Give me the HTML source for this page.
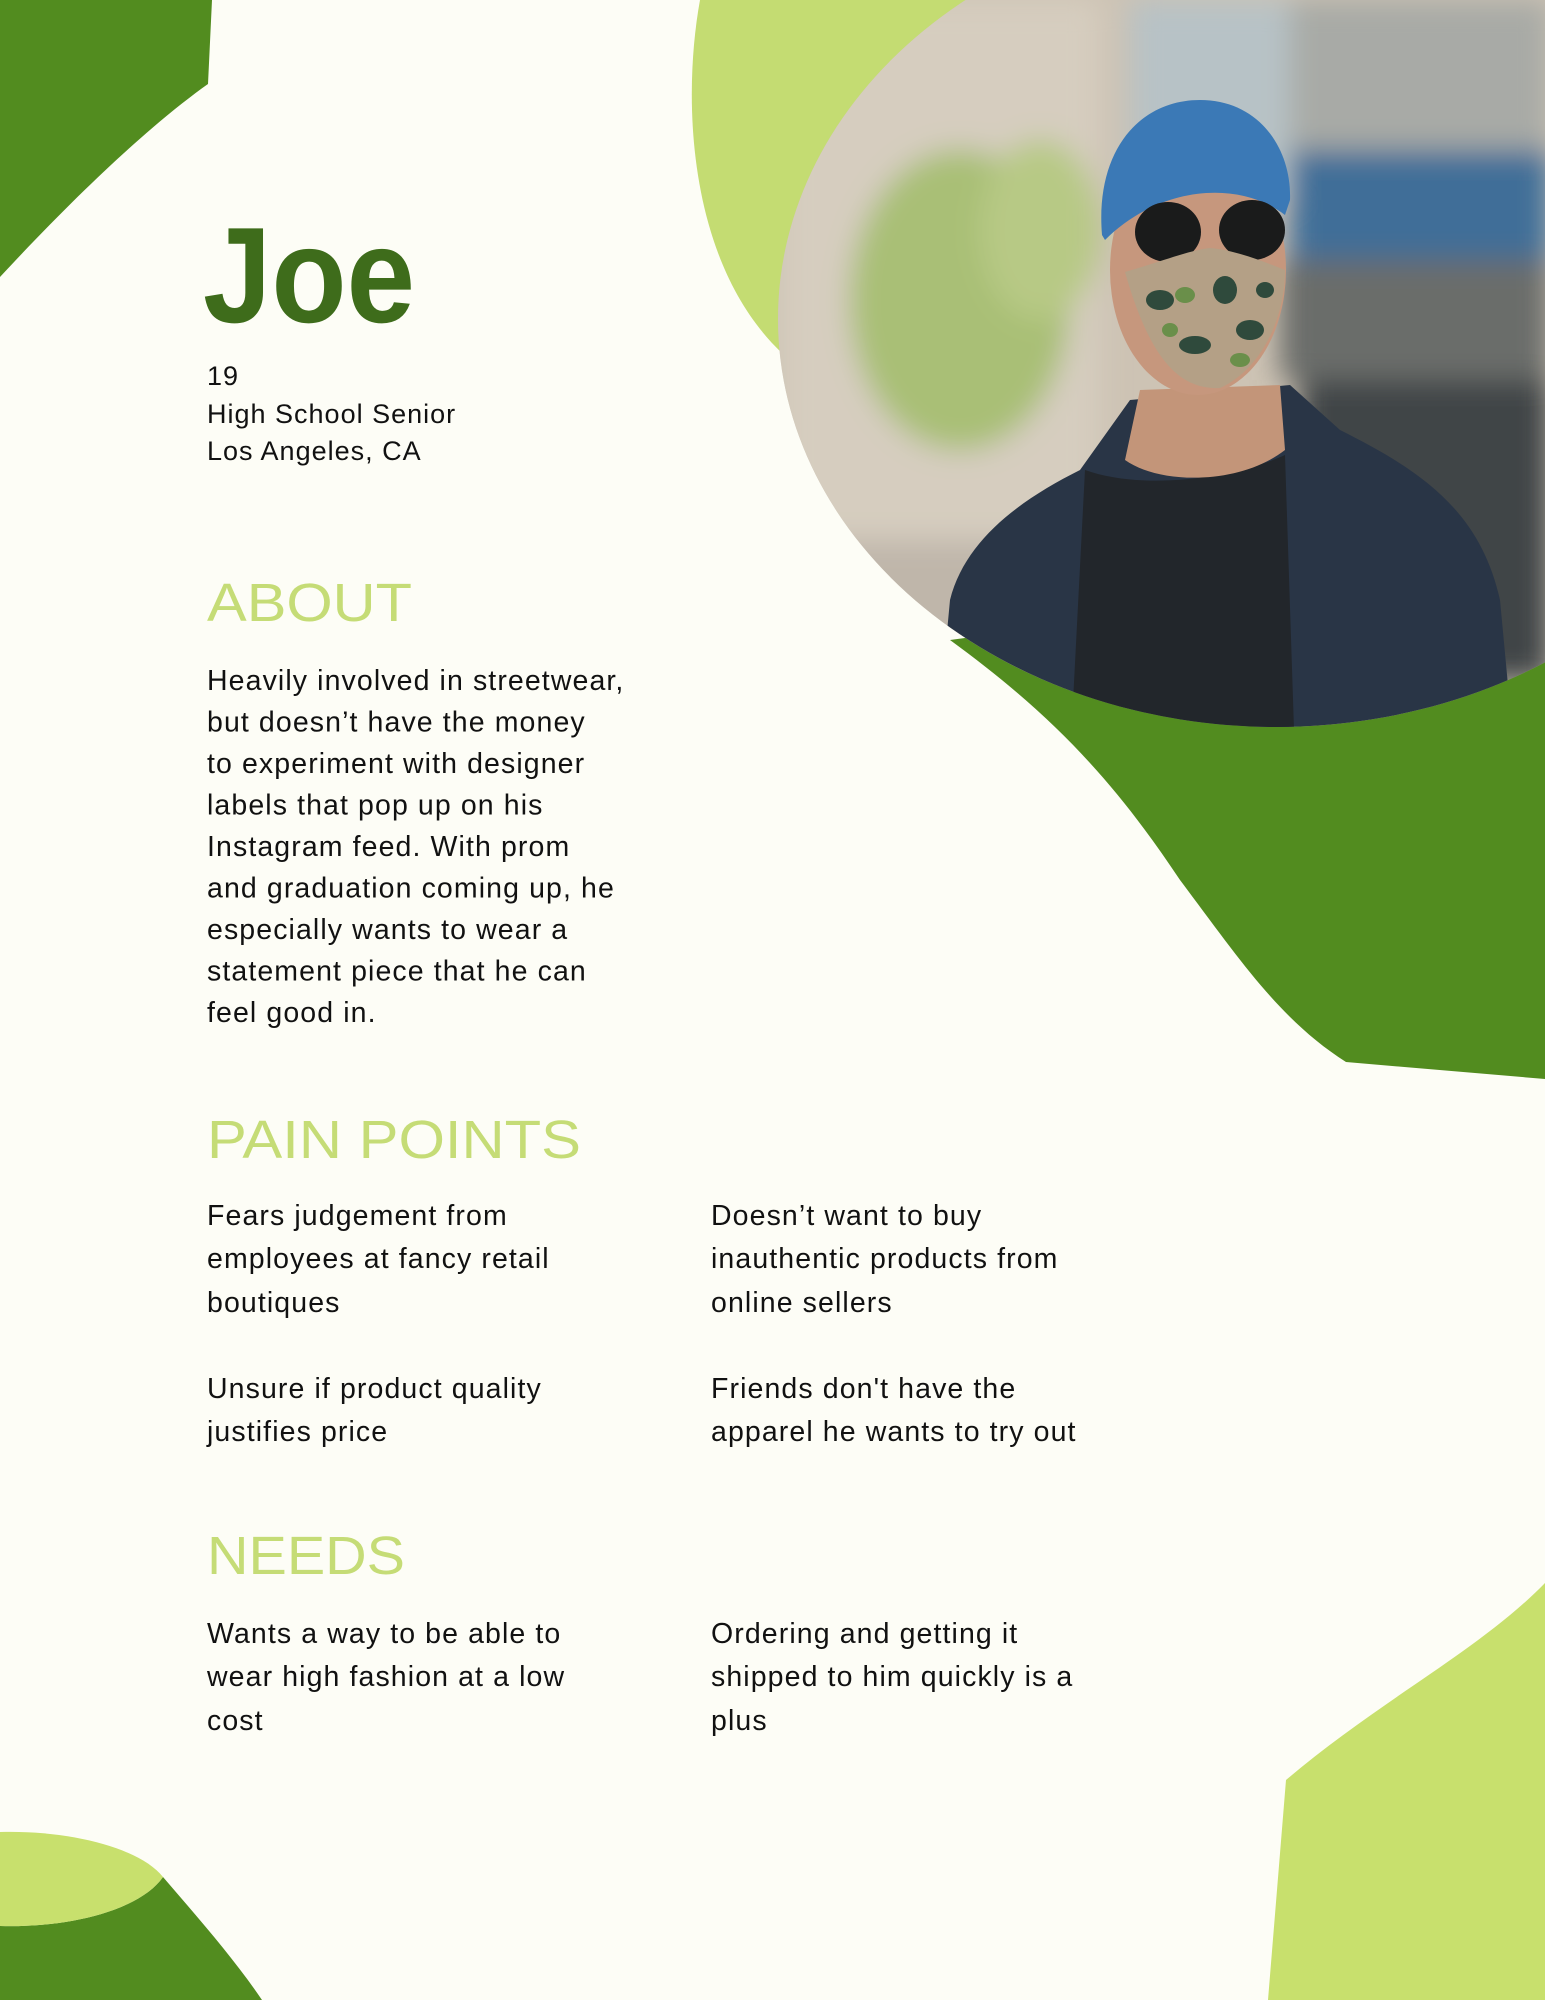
<!DOCTYPE html>
<html><head><meta charset="utf-8"><style>
html,body{margin:0;padding:0;background:#fdfdf6;}
svg{display:block}
text{font-family:"Liberation Sans",sans-serif;}
</style></head><body>
<svg width="1545" height="2000" viewBox="0 0 1545 2000" xmlns="http://www.w3.org/2000/svg">
<defs>
<clipPath id="ph"><ellipse cx="1276" cy="319" rx="498" ry="408"/></clipPath>
<filter id="bl" x="-20%" y="-20%" width="140%" height="140%"><feGaussianBlur stdDeviation="14"/></filter>
</defs>
<rect width="1545" height="2000" fill="#fdfdf6"/>
<path d="M0,0 L212,0 L208,84 C160,118 90,180 0,277 Z" fill="#528c1f"/>
<path d="M700,0 C680,110 690,290 805,372 L1000,320 L990,0 Z" fill="#c4dc72"/>
<path d="M950,640 C1060,720 1120,790 1180,880 C1240,960 1280,1020 1346,1062 L1545,1079 L1545,560 Z" fill="#528c1f"/>
<g clip-path="url(#ph)">
 <rect x="770" y="-100" width="800" height="850" fill="#cdc3b4"/>
 <g filter="url(#bl)">
  <rect x="780" y="0" width="320" height="560" fill="#d6cdbf"/>
  <rect x="1130" y="0" width="200" height="200" fill="#b7c2c6"/>
  <rect x="1290" y="0" width="260" height="170" fill="#a8aaa6"/>
  <rect x="1290" y="150" width="260" height="110" fill="#3f6e98"/>
  <rect x="1280" y="260" width="270" height="120" fill="#6a6d6b"/>
  <rect x="1300" y="380" width="250" height="300" fill="#3f4446"/>
  <ellipse cx="960" cy="300" rx="110" ry="150" fill="#a9bf76"/>
  <ellipse cx="1040" cy="230" rx="60" ry="90" fill="#b7c985"/>
  <rect x="780" y="540" width="260" height="200" fill="#bfb6aa"/>
 </g>
 <path d="M935,760 L950,600 C965,540 1020,500 1080,470 L1130,400 L1290,385 L1340,430 C1420,470 1480,510 1500,600 L1515,760 Z" fill="#293546"/>
 <path d="M1070,760 L1085,470 C1140,490 1230,480 1285,455 L1295,760 Z" fill="#22262b"/>
 <path d="M1140,390 L1280,385 L1285,450 C1240,485 1160,485 1125,460 Z" fill="#c39579"/>
 <ellipse cx="1198" cy="270" rx="88" ry="125" fill="#c6977d"/>
 <path d="M1102,235 C1095,150 1140,100 1200,100 C1260,100 1292,150 1290,200 L1285,215 C1240,180 1160,185 1105,240 Z" fill="#3b79b6"/>
 <ellipse cx="1168" cy="232" rx="33" ry="30" fill="#1a1b1b"/>
 <ellipse cx="1252" cy="230" rx="33" ry="30" fill="#1a1b1b"/>
 <path d="M1125,272 C1160,262 1190,250 1210,248 C1235,250 1265,262 1285,270 C1285,320 1260,370 1220,388 C1180,390 1150,360 1125,272 Z" fill="#b4a086"/>
 <g fill="#2f4a3c"><ellipse cx="1160" cy="300" rx="14" ry="10"/><ellipse cx="1225" cy="290" rx="12" ry="14"/><ellipse cx="1250" cy="330" rx="14" ry="10"/><ellipse cx="1195" cy="345" rx="16" ry="9"/><ellipse cx="1265" cy="290" rx="9" ry="8"/></g>
 <g fill="#6a8f4a"><ellipse cx="1185" cy="295" rx="10" ry="8"/><ellipse cx="1240" cy="360" rx="10" ry="7"/><ellipse cx="1170" cy="330" rx="8" ry="7"/></g>
</g>
<path d="M163,1877 C200,1920 235,1960 262,2000 L0,2000 L0,1926 C70,1928 140,1910 163,1877 Z" fill="#528c1f"/>
<path d="M0,1832 C70,1830 140,1848 163,1877 C140,1910 70,1928 0,1926 Z" fill="#c8e06d"/>
<path d="M1545,1583 C1480,1650 1380,1700 1286,1780 L1268,2000 L1545,2000 Z" fill="#c8e06d"/>

<text x="203" y="322" font-size="136" font-weight="bold" fill="#3e6c1b" textLength="212" lengthAdjust="spacingAndGlyphs">Joe</text>
<g font-size="27" fill="#111" letter-spacing="1">
<text x="207" y="385">19</text>
<text x="207" y="423">High School Senior</text>
<text x="207" y="460">Los Angeles, CA</text>
</g>
<g font-size="54" fill="#c5dc76">
<text x="207" y="621" textLength="205" lengthAdjust="spacingAndGlyphs">ABOUT</text>
<text x="207" y="1158" textLength="374" lengthAdjust="spacingAndGlyphs">PAIN POINTS</text>
<text x="207" y="1574" textLength="198" lengthAdjust="spacingAndGlyphs">NEEDS</text>
</g>
<g font-size="28.5" fill="#111" letter-spacing="1.1">
<text x="207" y="690">Heavily involved in streetwear,</text>
<text x="207" y="731.5">but doesn’t have the money</text>
<text x="207" y="773">to experiment with designer</text>
<text x="207" y="814.5">labels that pop up on his</text>
<text x="207" y="856">Instagram feed. With prom</text>
<text x="207" y="897.5">and graduation coming up, he</text>
<text x="207" y="939">especially wants to wear a</text>
<text x="207" y="980.5">statement piece that he can</text>
<text x="207" y="1022">feel good in.</text>

<text x="207" y="1225">Fears judgement from</text>
<text x="207" y="1268">employees at fancy retail</text>
<text x="207" y="1312">boutiques</text>
<text x="711" y="1225">Doesn’t want to buy</text>
<text x="711" y="1268">inauthentic products from</text>
<text x="711" y="1312">online sellers</text>
<text x="207" y="1398">Unsure if product quality</text>
<text x="207" y="1441">justifies price</text>
<text x="711" y="1398">Friends don't have the</text>
<text x="711" y="1441">apparel he wants to try out</text>

<text x="207" y="1643">Wants a way to be able to</text>
<text x="207" y="1686">wear high fashion at a low</text>
<text x="207" y="1730">cost</text>
<text x="711" y="1643">Ordering and getting it</text>
<text x="711" y="1686">shipped to him quickly is a</text>
<text x="711" y="1730">plus</text>
</g>
</svg>
</body></html>
